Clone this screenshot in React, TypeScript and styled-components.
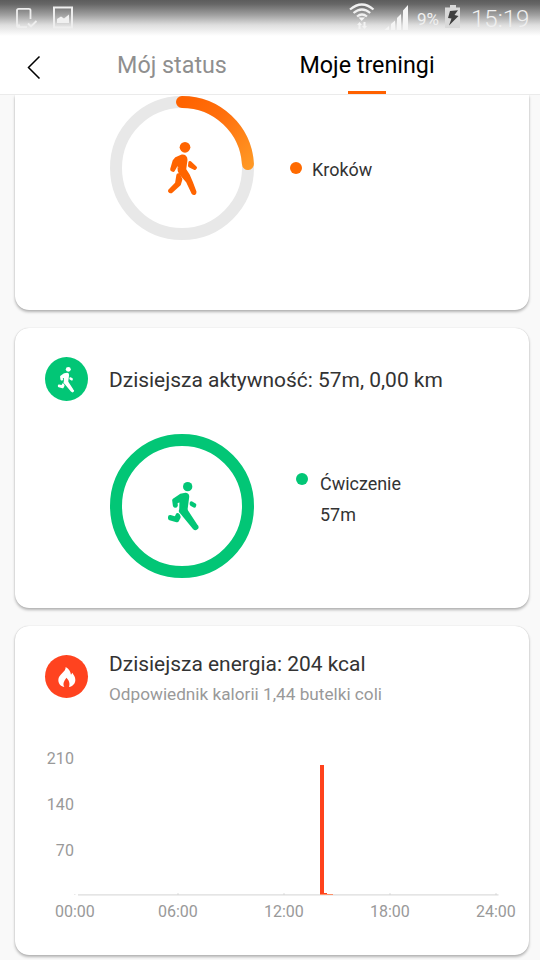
import React from "react";
import styled, { createGlobalStyle } from "styled-components";

const GlobalStyle = createGlobalStyle`
  * { box-sizing: border-box; }
  html, body { margin: 0; padding: 0; }
  body { background: #f9f9f9; font-family: Roboto, "Noto Sans", sans-serif; }
  svg { display: block; flex: none; }
`;

const Screen = styled.div`
  width: 540px;
  height: 960px;
  overflow: hidden;
  display: flex;
  flex-direction: column;
  background: #f9f9f9;
`;

const Header = styled.header`
  height: 95px;
  flex: none;
  background: #fff;
  border-bottom: 1px solid #ebebeb;
`;

const StatusBar = styled.div`
  height: 36px;
  display: flex;
  align-items: flex-start;
  justify-content: space-between;
  background: linear-gradient(#5c5c5c 0, #666 4px, #a0a0a0 15px, #dedede 25px, #fff 36px);
`;

const StatusGroup = styled.div`
  display: flex;
  align-items: flex-start;
  height: 36px;
`;

const StatusText = styled.span<{ $size: number; $width: number; $left: number }>`
  width: ${(p) => p.$width}px;
  margin-left: ${(p) => p.$left}px;
  font-size: ${(p) => p.$size}px;
  line-height: 38px;
  white-space: nowrap;
  color: #f0f0f0;
  font-weight: ${(p) => (p.$size > 20 ? 300 : 400)};
`;

const NavBar = styled.nav`
  height: 58px;
  display: flex;
`;

const BackButton = styled.button`
  width: 68px;
  height: 58px;
  border: 0;
  display: flex;
  align-items: flex-start;
  padding: 19px 0 0 27px;
  background: none;
`;

const Tab = styled.div<{ $active?: boolean; $left: number; $width: number }>`
  margin-left: ${(p) => p.$left}px;
  width: ${(p) => p.$width}px;
  height: 58px;
  display: flex;
  flex-direction: column;
  align-items: center;
  justify-content: space-between;
  font-size: 23.3px;
  line-height: 58px;
  white-space: nowrap;
  color: ${(p) => (p.$active ? "#000" : "#8f8f8f")};
`;

const TabLabel = styled.span`
  height: 54px;
`;

const Underline = styled.i`
  width: 38px;
  height: 3px;
  background: #ff6100;
`;

const Cards = styled.main`
  display: flex;
  flex-direction: column;
  gap: 18px;
  padding: 0 11px 0 15px;
`;

const Card = styled.section<{ $height: number; $cut?: boolean }>`
  height: ${(p) => p.$height}px;
  flex: none;
  background: #fff;
  border-radius: ${(p) => (p.$cut ? "0 0 14px 14px" : "14px")};
  box-shadow: 0 0 1px rgba(0, 0, 0, 0.22), 0 2px 3px rgba(0, 0, 0, 0.28);
  clip-path: ${(p) => (p.$cut ? "inset(0 -5px -6px -5px)" : "none")};
`;

const CardHeader = styled.div<{ $top: number; $height: number }>`
  display: flex;
  padding: ${(p) => p.$top}px 0 0 30px;
  height: ${(p) => p.$height}px;
`;

const Badge = styled.div<{ $color: string; $height: number }>`
  width: 43px;
  height: ${(p) => p.$height}px;
  border-radius: 50%;
  background: ${(p) => p.$color};
  flex: none;
  margin-right: 21px;
`;

const Title = styled.h2<{ $line: number }>`
  margin: 0;
  font-size: 20.95px;
  font-weight: 400;
  line-height: ${(p) => p.$line}px;
  color: #333;
  white-space: nowrap;
`;

const Subtitle = styled.p`
  margin: 9px 0 0;
  font-size: 17.2px;
  line-height: 24px;
  color: #999;
  white-space: nowrap;
`;

const RingRow = styled.div<{ $top: number }>`
  display: flex;
  padding: ${(p) => p.$top}px 0 0 95px;
`;

const Legend = styled.div<{ $left: number; $top: number; $gap: number }>`
  display: flex;
  align-items: flex-start;
  gap: ${(p) => p.$gap}px;
  margin: ${(p) => `${p.$top}px 0 0 ${p.$left}px`};
`;

const Dot = styled.i<{ $color: string; $top: number }>`
  width: 12px;
  height: 12px;
  margin-top: ${(p) => p.$top}px;
  border-radius: 50%;
  background: ${(p) => p.$color};
`;

const LegendText = styled.div`
  font-size: 17.95px;
  line-height: 31px;
  color: #333;
`;

const Chart = styled.div`
  display: grid;
  grid-template-columns: 59px 1fr;
  height: 168px;
`;

const YAxis = styled.div`
  display: flex;
  flex-direction: column;
  padding-top: 2px;
  text-align: right;
  font-size: 16px;
  line-height: 46px;
  letter-spacing: 0.1px;
  color: #999;
`;

const XAxis = styled.div`
  display: grid;
  grid-template-columns: 103px 106px 106px 106px 1fr;
  padding-left: 40px;
  font-size: 16px;
  line-height: 20px;
  color: #999;
`;

const RunnerShape = ({ color }: { color: string }) => (
  <g fill={color} stroke={color} strokeLinejoin="round">
    <circle cx="263" cy="170" r="14" stroke="none" />
    <path d="M222 211L242 197L257 194Q263 195 262 202L257 240L243 244L244 209L227 216L228 226Q226 230 224 226Z" strokeWidth="11" />
    <path d="M242 243L254 236L288 288Q293 292 288 294Q286 296 282 292Z" strokeWidth="11" />
    <path d="M274 219L284 225L283 228L274 223Z" strokeWidth="10" />
    <path d="M210 261L228 266L233 255L236 261L231 271L210 265Z" strokeWidth="12" />
  </g>
);

const WalkerShape = () => (
  <g fill="#ff6400" stroke="#ff6400" strokeLinejoin="round">
    <circle cx="255" cy="172" r="16" stroke="none" />
    <path d="M229 208L246 200Q256 199 256 209L252 239L263 256L272 277L283 306Q283 311 280 307L264 273L243 249Q238 242 239 234L241 212L232 216L219 239L217 238L224 214Z" strokeWidth="13" />
    <path d="M270 218L286 233L284 235L269 227Z" strokeWidth="10" />
    <path d="M235 256L241 268L237 282L213 304L210 303L231 281Z" strokeWidth="12" />
  </g>
);

const StepsRing = () => (
  <svg width="144" height="145" viewBox="30 15 432 435">
    <defs>
      <linearGradient id="steps" x1="246" y1="36" x2="443" y2="234" gradientUnits="userSpaceOnUse">
        <stop offset="0" stopColor="#ff6300" />
        <stop offset="0.4" stopColor="#ff6f0d" />
        <stop offset="1" stopColor="#ff9824" />
      </linearGradient>
    </defs>
    <circle cx="246" cy="234" r="198" fill="none" stroke="#e8e8e8" strokeWidth="36" />
    <path d="M246 36 A198 198 0 0 1 443.8 222" fill="none" stroke="url(#steps)" strokeWidth="36" strokeLinecap="round" />
    <WalkerShape />
  </svg>
);

const ActivityRing = () => (
  <svg width="144" height="144" viewBox="30 12 432 432">
    <circle cx="246" cy="228" r="198" fill="none" stroke="#02c676" strokeWidth="36" />
    <RunnerShape color="#02c676" />
  </svg>
);

const LeftStatusIcons = () => (
  <svg width="90" height="36" viewBox="0 0 90 36" fill="none" stroke="#eee" strokeWidth="1.8">
    <path d="M30.500 19V10.500Q30.500 8.800 28.800 8.800H18.700Q17 8.800 17 10.500V25.500Q17 27.200 18.700 27.200H27M17 25.500H20" />
    <path d="M28 23.500L31 26.500L36.500 21" />
    <rect x="54" y="7.500" width="18" height="20" strokeWidth="2" />
    <path d="M57 23V19L61 16.500L64 18.500L69 14.500V23Z" fill="#f0f0f0" stroke="none" />
  </svg>
);

const SignalIcons = () => (
  <svg width="68" height="36" viewBox="348 0 68 36" fill="none" stroke="#f0f0f0">
    <path d="M350 9.500Q362 -0.500 373.500 9.500M353.500 13Q362 6 370.200 13M357 16.500Q362 12.500 367 16.500" strokeWidth="2.200" />
    <path d="M358.500 17.500H365L361.700 21Z" fill="#f5f5f5" stroke="none" />
    <path d="M357 25L359.500 22L362 25H360.500V29H358.500V25ZM362 26H363.500V22H365.500V26H367L364.500 29Z" fill="#f3f3f3" stroke="none" />
    <path d="M384.500 30L389 26V30ZM391 24L395 20.500V30H391ZM397 18L401 14V30H397ZM403 10.500L408 5V30H403Z" fill="#f5f5f5" stroke="none" />
  </svg>
);

const BatteryIcon = () => (
  <svg width="16" height="36" viewBox="0 0 16 36">
    <path d="M5 5H11V7.500H15V28H0V7.500H5Z" fill="#d9d9d9" />
    <path d="M5 11L13 10.300L9.500 15L13.500 16L4 25.500L6.500 18.500L3 18Z" fill="#404040" />
  </svg>
);

const FlameIcon = () => (
  <svg width="43" height="43" viewBox="135 195 129 129">
    <path d="M197 231C198 247 175 252 175 270C175 283 184 290 193 291C187 280 193 273 199 263C207 270 211 281 207 291C218 289 226 281 226 270C226 260 221 255 217 248L213 254C211 244 207 236 197 231Z" fill="#fff" />
  </svg>
);

const EnergyPlot = () => (
  <svg width="455" height="162" viewBox="74 734 455 162">
    <rect x="74" y="894" width="1.500" height="1" fill="#e9e9e9" />
    <rect x="78" y="894" width="420.500" height="1.700" fill="#e5e5e5" />
    {[178, 284, 390, 496].map((x) => (
      <rect key={x} x={x - 1} y="893.500" width="2" height="1.500" fill="#ddd" />
    ))}
    <rect x="320" y="894" width="13" height="1" fill="#ff9068" />
    <rect x="320" y="765" width="4" height="129" fill="#ff421c" />
    <rect x="324" y="893" width="3" height="1" fill="#ff421c" />
  </svg>
);

export default function App() {
  return (
    <>
      <GlobalStyle />
      <Screen>
        <Header>
          <StatusBar>
            <LeftStatusIcons />
            <StatusGroup>
              <SignalIcons />
              <StatusText $size={17} $width={28} $left={1}>9%</StatusText>
              <BatteryIcon />
              <StatusText $size={24} $width={69} $left={10}>15:19</StatusText>
            </StatusGroup>
          </StatusBar>
          <NavBar>
            <BackButton aria-label="Wstecz">
              <svg width="14" height="24" viewBox="0 0 14 24" fill="none" stroke="#000" strokeWidth="1.500">
                <path d="M12.500 1.500L1.500 12.500L12.500 23.500" />
              </svg>
            </BackButton>
            <Tab $left={49} $width={110}><TabLabel>Mój status</TabLabel></Tab>
            <Tab $active $left={73} $width={134}>
              <TabLabel>Moje treningi</TabLabel>
              <Underline />
            </Tab>
          </NavBar>
        </Header>
        <Cards>
          <Card $height={215} $cut>
            <RingRow $top={0}>
              <StepsRing />
              <Legend $left={36} $top={59} $gap={10}>
                <Dot $color="#ff6a00" $top={8} />
                <LegendText>Kroków</LegendText>
              </Legend>
            </RingRow>
          </Card>
          <Card $height={280}>
            <CardHeader $top={29} $height={73}>
              <Badge $color="#02c676" $height={44}>
                <svg width="43" height="44" viewBox="135 200 129 132">
                  <g transform="translate(65.500 147) scale(0.530)">
                    <RunnerShape color="#fff" />
                  </g>
                </svg>
              </Badge>
              <Title $line={46}>Dzisiejsza aktywność: 57m, 0,00 km</Title>
            </CardHeader>
            <RingRow $top={33}>
              <ActivityRing />
              <Legend $left={42} $top={34} $gap={12}>
                <Dot $color="#02c676" $top={5} />
                <LegendText>Ćwiczenie<br />57m</LegendText>
              </Legend>
            </RingRow>
          </Card>
          <Card $height={329}>
            <CardHeader $top={29} $height={108}>
              <Badge $color="#ff431f" $height={43}><FlameIcon /></Badge>
              <div>
                <Title $line={18}>Dzisiejsza energia: 204 kcal</Title>
                <Subtitle>Odpowiednik kalorii 1,44 butelki coli</Subtitle>
              </div>
            </CardHeader>
            <Chart>
              <YAxis><span>210</span><span>140</span><span>70</span></YAxis>
              <EnergyPlot />
            </Chart>
            <XAxis>
              <span>00:00</span><span>06:00</span><span>12:00</span><span>18:00</span><span>24:00</span>
            </XAxis>
          </Card>
        </Cards>
      </Screen>
    </>
  );
}
